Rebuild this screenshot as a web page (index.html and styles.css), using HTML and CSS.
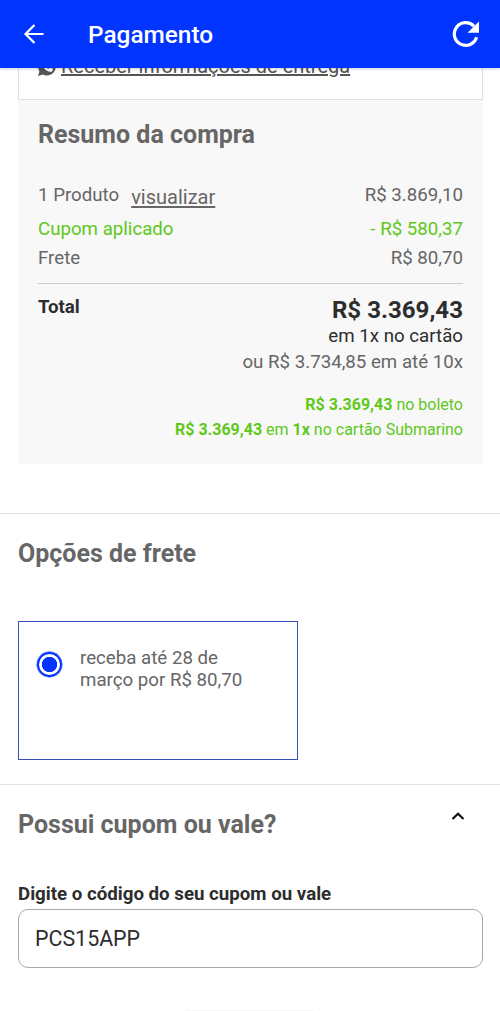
FILE: index.html
```html
<!DOCTYPE html>
<html lang="pt-BR">
<head>
<meta charset="utf-8">
<meta name="viewport" content="width=device-width, initial-scale=1">
<title>Pagamento</title>
<link rel="stylesheet" href="styles.css">
</head>
<body>
<header class="app-bar">
  <svg class="back" viewBox="0 0 22 22" aria-hidden="true"><path d="M20.500 11H3M11.500 2L2.500 11l9 9"/></svg>
  <h1 class="app-title">Pagamento</h1>
  <svg class="reload" viewBox="0 0 28 28" aria-hidden="true"><path class="arc" d="M24.600 17.300A11.400 11.400 0 1 1 22 6.200"/><path class="tip" d="M27 1.500v11.200H15.500z"/></svg>
</header>
<main>
  <section class="delivery">
    <svg class="phone" viewBox="0 0 18 18" aria-hidden="true"><path class="bubble" d="M9 0a8.800 8.800 0 1 1-4.200 16.600L0 18l1.400-4.600A8.800 8.800 0 0 1 9 0z"/><path class="handset" d="M4.500 4.500c-.5 5 4.300 10.200 9.500 9l1.200-2.400-3-1.700-1.600 1.400c-1.400-.6-2.300-1.500-2.900-2.900l1.200-1.400-1.300-2.500z"/></svg>
    <a class="link">Receber informações de entrega</a>
  </section>
  <section class="summary">
    <h2 class="heading">Resumo da compra</h2>
    <div class="rows">
      <div class="row product"><span>1 Produto</span><a class="view">visualizar</a><span class="value">R$ 3.869,10</span></div>
      <div class="row coupon"><span>Cupom aplicado</span><span class="value">- R$ 580,37</span></div>
      <div class="row"><span>Frete</span><span class="value">R$ 80,70</span></div>
    </div>
    <div class="total">
      <strong class="total-label">Total</strong>
      <div class="amounts">
        <strong class="price">R$ 3.369,43</strong>
        <span class="once">em 1x no cartão</span>
        <span class="parcel">ou R$ 3.734,85 em até 10x</span>
        <span class="offer slip"><b>R$ 3.369,43</b> no boleto</span>
        <span class="offer"><b>R$ 3.369,43</b> em <b>1x</b> no cartão Submarino</span>
      </div>
    </div>
  </section>
  <section class="shipping">
    <h2 class="heading">Opções de frete</h2>
    <div class="option">
      <span class="radio"></span>
      <p class="option-text">receba até 28 de<br>março por R$ 80,70</p>
    </div>
  </section>
  <section class="voucher">
    <div class="voucher-head">
      <h2 class="heading">Possui cupom ou vale?</h2>
      <svg class="chevron" viewBox="0 0 14 8" aria-hidden="true"><path d="M1.500 7L7 1.700l5.500 5.300"/></svg>
    </div>
    <label class="label" for="code">Digite o código do seu cupom ou vale</label>
    <input class="code" id="code" type="text" value="PCS15APP">
  </section>
  <div class="handle"></div>
</main>
</body>
</html>
```
FILE: styles.css
```css
* { box-sizing: border-box; }
body {
  margin: 0;
  height: 1011px;
  overflow: hidden;
  background: #fff;
  color: #666;
  font: 18.7px/28px Roboto, sans-serif;
}
h1, h2, p { margin: 0; }
main { display: flex; flex-direction: column; height: 943px; }
.app-bar {
  position: relative;
  z-index: 1;
  display: flex;
  align-items: center;
  height: 68px;
  padding: 0 20px 0 23px;
  background: #0234ff;
  box-shadow: 0 1px 3px rgba(0, 0, 0, .2);
}
.back { width: 22px; height: 22px; fill: none; stroke: #fff; stroke-width: 2.2; }
.app-title { flex: 1; margin-left: 43px; padding-top: 1px; color: #fff; font-size: 24.4px; font-weight: 500; }
.reload { width: 28px; height: 28px; }
.reload .arc { fill: none; stroke: #fff; stroke-width: 3.2; }
.reload .tip { fill: #fff; }
.delivery {
  display: flex;
  align-items: flex-end;
  flex: none;
  height: 32px;
  margin: 0 17px 0 18px;
  padding: 0 19px 22px;
  border: 1px solid #ddd;
  border-top: 0;
}
.phone { flex: none; width: 18px; height: 18px; margin-bottom: 1px; }
.bubble { fill: #555; }
.handset { fill: #fff; }
.link { margin: 0 0 -3px 5px; color: #555; font-size: 20px; text-decoration: underline; text-decoration-thickness: 2px; white-space: nowrap; }
.summary { flex: none; height: 364px; margin: 0 17px 0 18px; padding: 21px 20px 0; background: #f8f8f8; }
.heading { color: #666; font-size: 25px; font-weight: 700; line-height: 28px; }
.rows { padding: 32px 0 10px; border-bottom: 1px solid #ccc; }
.row { display: flex; height: 29px; line-height: 29px; }
.value { margin-left: auto; }
.product { height: 34px; }
.view { margin: 2px 0 0 12px; font-size: 20px; text-decoration: underline; text-decoration-thickness: 1.5px; text-underline-offset: 2px; }
.coupon, .offer { color: #5fc81a; }
.total { display: flex; justify-content: space-between; padding-top: 9px; color: #2d2d2d; }
.total-label { font-weight: 700; }
.amounts { display: flex; flex-direction: column; align-items: flex-end; padding-top: 3px; }
.price { font-size: 24.1px; line-height: 28px; }
.once { line-height: 24px; }
.parcel { color: #666; line-height: 28px; }
.offer { font-size: 16px; line-height: 25px; }
.slip { margin-top: 16px; }
.shipping { flex: none; height: 271px; margin-top: 49px; padding: 26px 18px 0; border-top: 1px solid #e2e2e2; }
.option { display: flex; width: 280px; height: 139px; margin-top: 53px; padding: 25px 18px; border: 1px solid #3450b8; }
.radio {
  flex: none;
  width: 25px;
  height: 25px;
  margin: 5px 18px 0 0;
  border: 2.500px solid #0234ff;
  border-radius: 50%;
  background: radial-gradient(circle, #0234ff 7.3px, #fff 8px);
  box-shadow: 0 0 0 .4px #0234ff;
}
.option-text { line-height: 22px; }
.voucher { flex: none; padding: 25px 17px 0 18px; border-top: 1px solid #e2e2e2; }
.voucher-head { display: flex; justify-content: space-between; padding-right: 18px; }
.voucher-head .heading { padding-top: 1px; }
.chevron { width: 14px; height: 8px; margin-top: 2px; fill: none; stroke: #111; stroke-width: 2.2; }
.label { display: block; margin-top: 41px; color: #2d2d2d; font-weight: 700; }
.code {
  display: block;
  width: 100%;
  height: 59px;
  margin-top: 1px;
  padding: 0 16px 1px;
  border: 1px solid #aaa;
  border-radius: 10px;
  background: #fff;
  color: #2d2d2d;
  font: 21.4px Roboto, sans-serif;
}
.handle { width: 128px; height: 1px; margin: auto auto 0; background: #f7f7f7; }
```
